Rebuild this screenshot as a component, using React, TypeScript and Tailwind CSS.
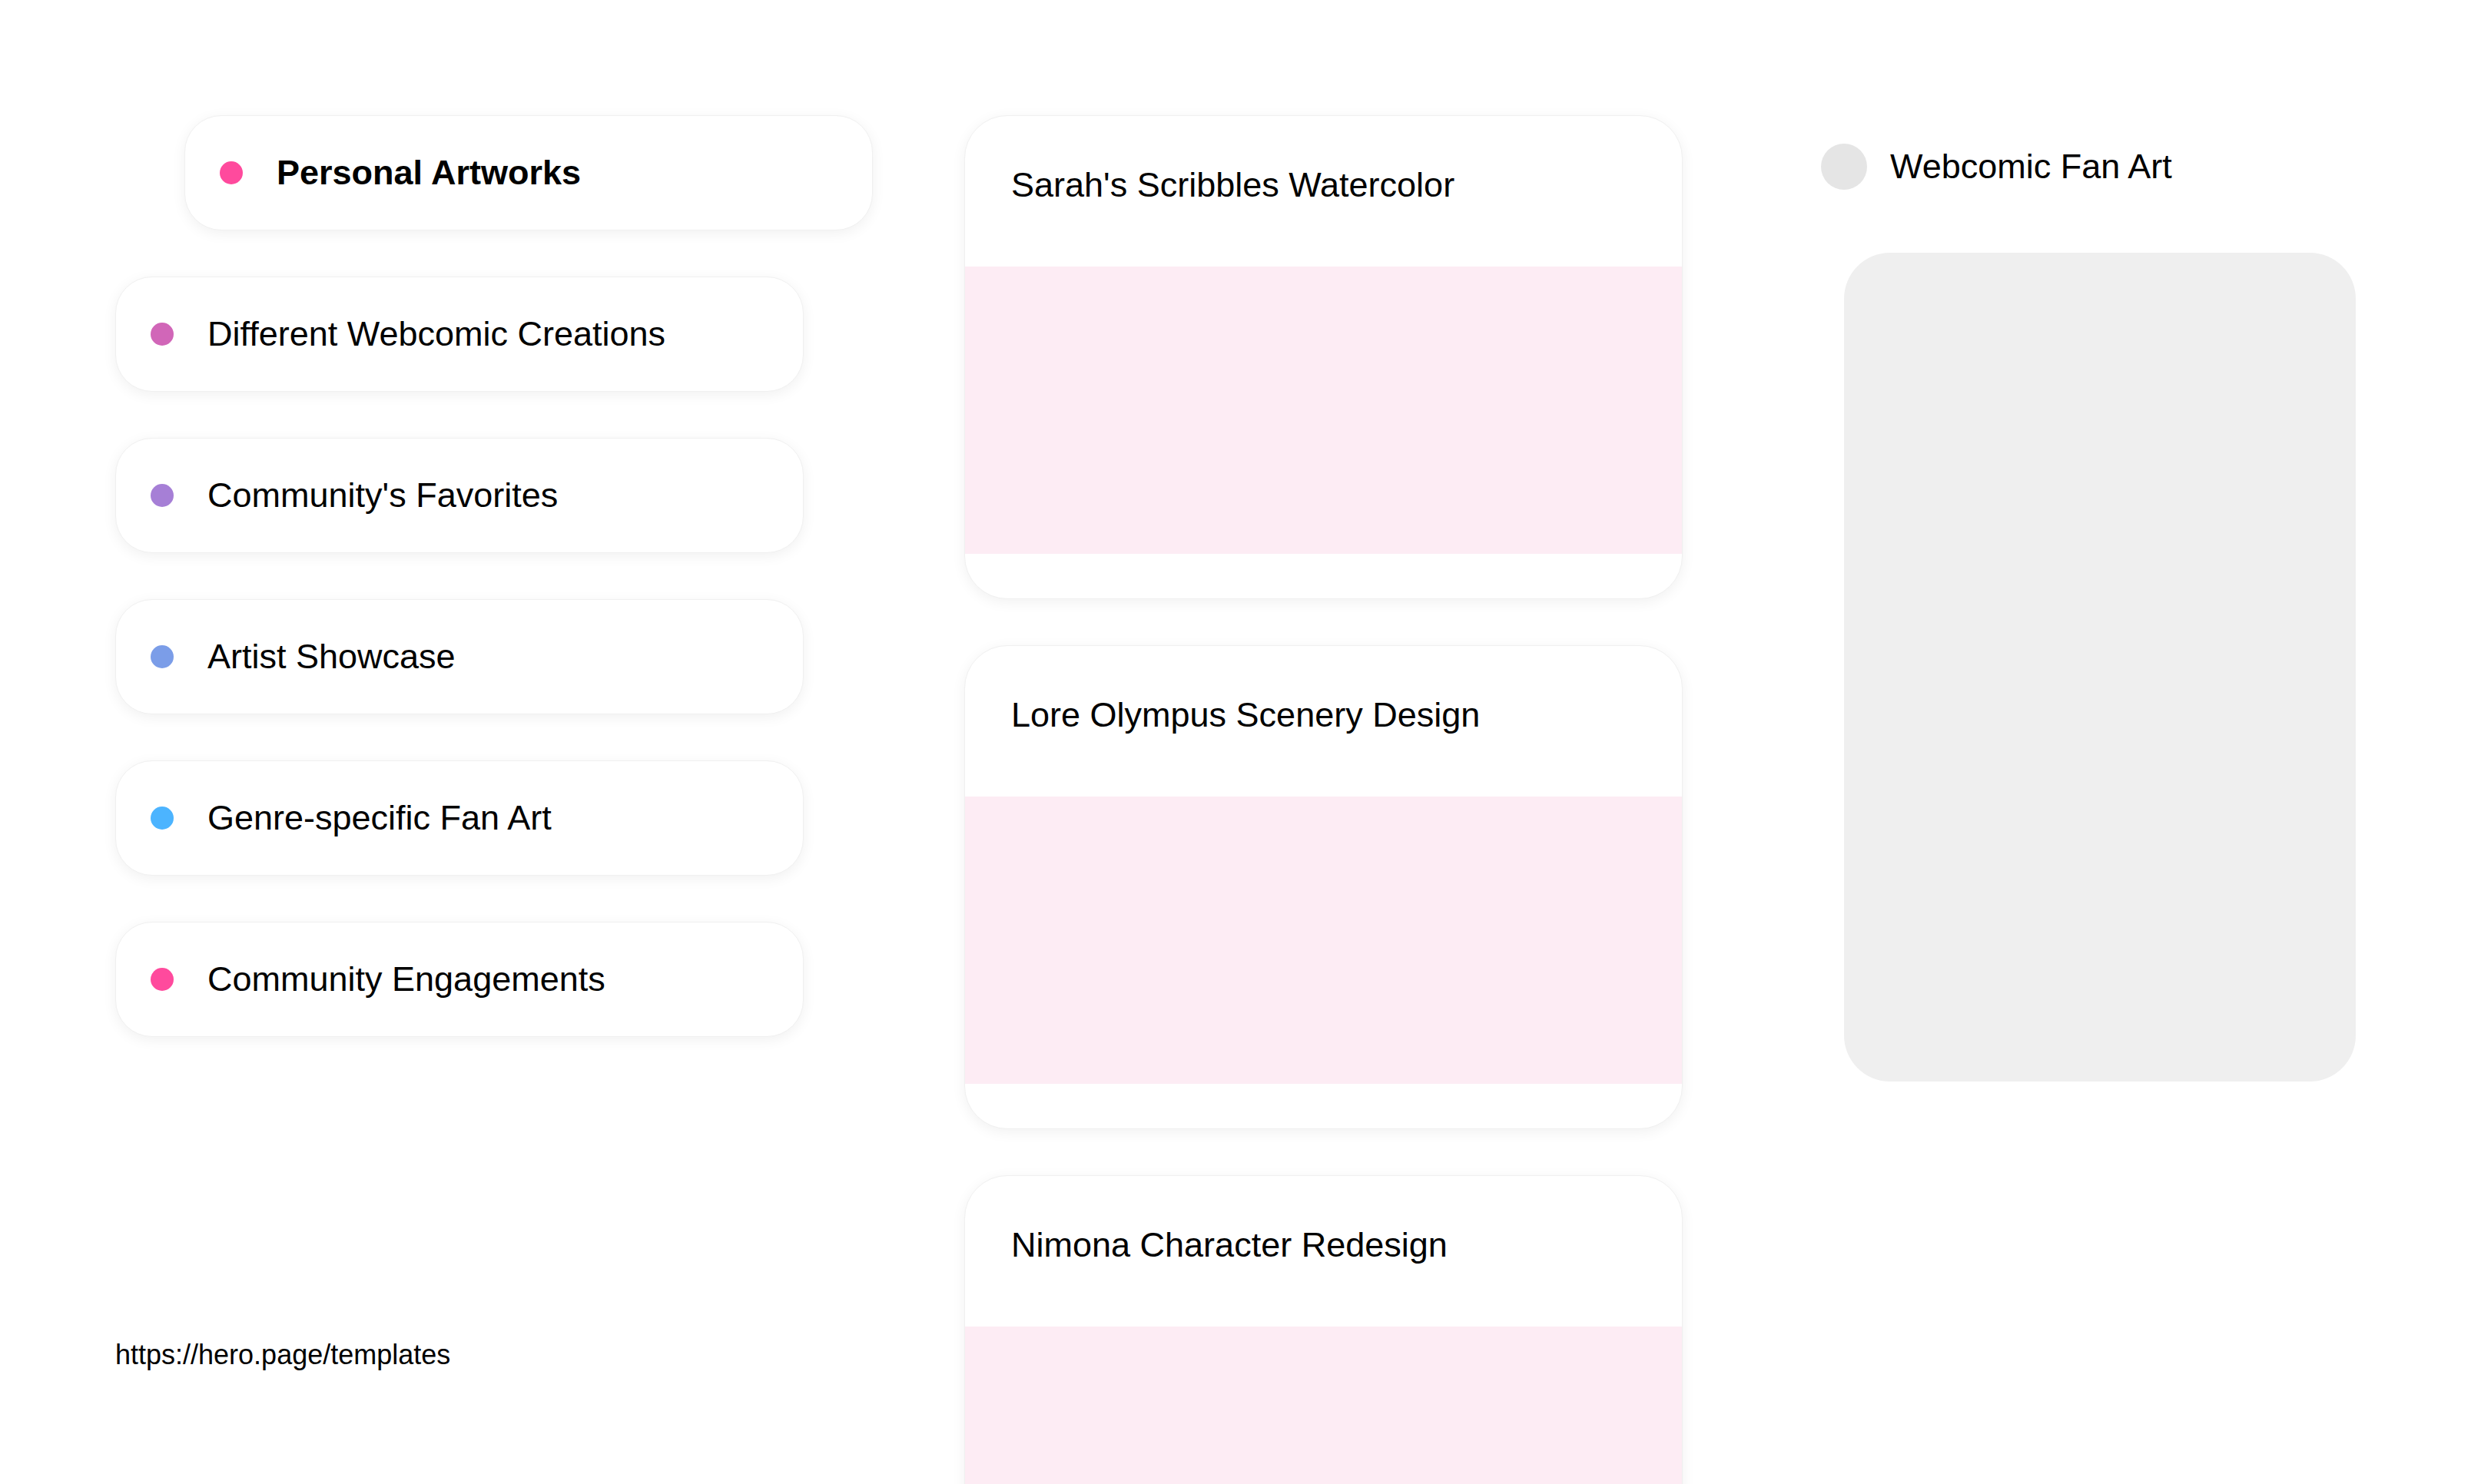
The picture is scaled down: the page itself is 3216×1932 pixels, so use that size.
import React from "react";

const items = [
  { label: "Personal Artworks", color: "bg-[#ff4a9d]", active: true },
  { label: "Different Webcomic Creations", color: "bg-[#d166b8]", active: false },
  { label: "Community's Favorites", color: "bg-[#a67fd6]", active: false },
  { label: "Artist Showcase", color: "bg-[#7b9de8]", active: false },
  { label: "Genre-specific Fan Art", color: "bg-[#4cb4ff]", active: false },
  { label: "Community Engagements", color: "bg-[#ff4a9d]", active: false },
];

const works = [
  "Sarah's Scribbles Watercolor",
  "Lore Olympus Scenery Design",
  "Nimona Character Redesign",
];

export default function App() {
  return (
    <div
      className="w-[3216px] h-[1932px] overflow-hidden bg-white text-black flex pt-[150px] pl-[150px]"
      style={{ fontFamily: '"Liberation Sans", Arial, sans-serif' }}
    >
      {/* Left column */}
      <div className="w-[986px] shrink-0 flex flex-col">
        <div className="flex flex-col gap-[60px]">
          {items.map((it) => (
            <div
              key={it.label}
              className={`${it.active ? "ml-[90px]" : ""} w-[896px] h-[150px] rounded-[48px] bg-white border border-[#f0f0f0] shadow-[0_4px_18px_rgba(0,0,0,0.06)] flex items-center pl-[45px]`}
            >
              <span className={`w-[30px] h-[30px] rounded-full shrink-0 ${it.color}`} />
              <span
                className={`ml-[44px] text-[45px] leading-[52px] ${it.active ? "font-bold" : "font-normal"}`}
              >
                {it.label}
              </span>
            </div>
          ))}
        </div>
        <div className="mt-[393px] text-[36px] leading-[41px]">https://hero.page/templates</div>
      </div>

      {/* Middle column */}
      <div className="ml-[119px] w-[935px] shrink-0 flex flex-col gap-[60px]">
        {works.map((w) => (
          <div
            key={w}
            className="w-[935px] h-[630px] shrink-0 rounded-[56px] bg-white border border-[#f0f0f0] shadow-[0_4px_18px_rgba(0,0,0,0.06)] overflow-hidden flex flex-col"
          >
            <div className="h-[196px] shrink-0 pl-[60px] pt-[64px]">
              <div className="text-[45px] leading-[52px]">{w}</div>
            </div>
            <div className="h-[374px] shrink-0 bg-[#fdecf4]" />
            <div className="flex-1" />
          </div>
        ))}
      </div>

      {/* Right column */}
      <div className="ml-[180px] w-[696px] shrink-0 flex flex-col">
        <div className="mt-[37px] flex items-center">
          <span className="w-[60px] h-[60px] rounded-full bg-[#e5e5e5] shrink-0" />
          <span className="ml-[30px] text-[45px] leading-[52px]">Webcomic Fan Art</span>
        </div>
        <div className="mt-[82px] ml-[30px] w-[666px] h-[1079px] rounded-[60px] bg-[#efefef]" />
      </div>
    </div>
  );
}
